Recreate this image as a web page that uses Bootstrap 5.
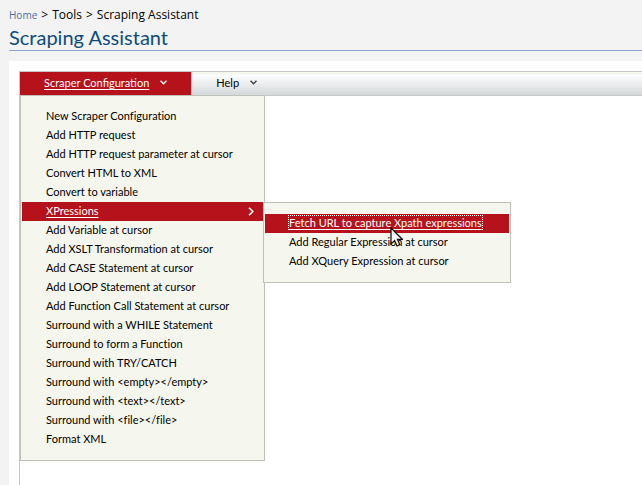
<!DOCTYPE html>
<html lang="en">
<head>
<meta charset="utf-8">
<meta name="viewport" content="width=device-width, initial-scale=1">
<title>Scraping Assistant</title>
<link href="https://cdn.jsdelivr.net/npm/bootstrap@5.3.0/dist/css/bootstrap.min.css" rel="stylesheet">
<style>
body { font-family: Lato, "Open Sans", sans-serif; font-variant-ligatures: none; font-size: 11px; line-height: 18px; color: #000; background: #f3f3f3; overflow: hidden; }
.page { min-height: 100vh; padding: 6px 0 0 9px; }
.crumbs { --bs-breadcrumb-divider: ">"; --bs-breadcrumb-divider-color: #000; --bs-breadcrumb-item-padding-x: 4px; --bs-breadcrumb-item-active-color: #000; --bs-breadcrumb-font-size: 12px; font-family: "Open Sans", sans-serif; }
.crumbs a { color: #4a6da3; font-size: 10px; text-decoration: none; }
.page-title { font-size: 20px; line-height: 26px; color: #0f4c7c; border-bottom: 1px solid #8ea5cd; margin-bottom: 10px; }
.panel { background: #fff; padding: 10px 0 0 10px; }
.workspace { border: solid #c8c8c8; border-width: 1px 0 0 1px; }
.menubar { background: linear-gradient(#f5f6ed 0, #f5f6ed 2px, #fdfefe 3px, #d5d8da 100%); border-bottom: 1px solid #c8c8c8; }
.menu-tab { color: #000; border: 0; border-right: 1px solid #c8c8c8; background: none; padding: 1px 24px 3px; gap: 11px; font-size: 11px; line-height: 19px; height: 23px; }
.menu-tab.open { background: #b5121b; color: #fff; }
.menu-tab.plain { border-right-color: transparent; }
.drop { min-width: 0; width: 245px; margin: 0; padding: 11px 1px; border: 1px solid #c0c1b8; border-radius: 0; background: #f5f6ed; font-size: 11px; color: #000; top: 100%; left: 0; display: block; }
.drop .dropdown-item { padding: 0 24px 2px; line-height: 17px; color: #000; font-size: 11px; }
.drop .dropdown-item.chosen { background: #b5121b; color: #fff; }
.lined { text-decoration: underline; text-underline-offset: 2px; }
.sub-drop { width: 248px; top: 0; left: 241px; }
.focused { outline: 1px dotted #fff; }
.go { right: 9px; top: 5px; }
.pointer { left: 126px; top: 24px; pointer-events: none; }
</style>
</head>
<body>
<div class="page d-flex flex-column">
  <nav aria-label="breadcrumb">
    <ol class="breadcrumb crumbs mb-0">
      <li class="breadcrumb-item"><a href="#">Home</a></li>
      <li class="breadcrumb-item">Tools</li>
      <li class="breadcrumb-item active" aria-current="page">Scraping Assistant</li>
    </ol>
  </nav>
  <h1 class="page-title fw-normal">Scraping Assistant</h1>
  <main class="panel flex-grow-1 d-flex flex-column">
    <div class="workspace flex-grow-1">
      <div class="menubar d-flex">
        <div class="position-relative">
          <button type="button" class="menu-tab open d-flex align-items-center" aria-expanded="true"><span class="lined">Scraper Configuration</span>
            <svg width="7" height="5" viewBox="0 0 7 5" fill="none" stroke="currentColor" stroke-width="1.5" aria-hidden="true"><path d="M.5 .7 3.5 3.7 6.5 .7"/></svg></button>
          <ul class="dropdown-menu drop">
            <li><a class="dropdown-item" href="#">New Scraper Configuration</a></li>
            <li><a class="dropdown-item" href="#">Add HTTP request</a></li>
            <li><a class="dropdown-item" href="#">Add HTTP request parameter at cursor</a></li>
            <li><a class="dropdown-item" href="#">Convert HTML to XML</a></li>
            <li><a class="dropdown-item" href="#">Convert to variable</a></li>
            <li class="position-relative">
              <a class="dropdown-item chosen" href="#"><span class="lined">XPressions</span>
                <svg class="go position-absolute" width="6" height="9" viewBox="0 0 6 9" fill="none" stroke="currentColor" stroke-width="1.6" aria-hidden="true"><path d="M1 .7 4.8 4.5 1 8.3"/></svg></a>
              <ul class="dropdown-menu drop sub-drop">
                <li><a class="dropdown-item chosen" href="#"><span class="lined focused">Fetch URL to capture Xpath expressions</span></a></li>
                <li><a class="dropdown-item" href="#">Add Regular Expression at cursor</a></li>
                <li><a class="dropdown-item" href="#">Add XQuery Expression at cursor</a></li>
                <li class="pointer position-absolute" aria-hidden="true">
                  <svg class="d-block" width="13" height="20" viewBox="0 0 13 20"><path d="M1 1V17L4.6 13.5 7 19 9.8 17.7 7.5 12.3H12.3Z" fill="#fff" stroke="#111" stroke-width="1.3"/></svg>
                </li>
              </ul>
            </li>
            <li><a class="dropdown-item" href="#">Add Variable at cursor</a></li>
            <li><a class="dropdown-item" href="#">Add XSLT Transformation at cursor</a></li>
            <li><a class="dropdown-item" href="#">Add CASE Statement at cursor</a></li>
            <li><a class="dropdown-item" href="#">Add LOOP Statement at cursor</a></li>
            <li><a class="dropdown-item" href="#">Add Function Call Statement at cursor</a></li>
            <li><a class="dropdown-item" href="#">Surround with a WHILE Statement</a></li>
            <li><a class="dropdown-item" href="#">Surround to form a Function</a></li>
            <li><a class="dropdown-item" href="#">Surround with TRY/CATCH</a></li>
            <li><a class="dropdown-item" href="#">Surround with &lt;empty&gt;&lt;/empty&gt;</a></li>
            <li><a class="dropdown-item" href="#">Surround with &lt;text&gt;&lt;/text&gt;</a></li>
            <li><a class="dropdown-item" href="#">Surround with &lt;file&gt;&lt;/file&gt;</a></li>
            <li><a class="dropdown-item" href="#">Format XML</a></li>
          </ul>
        </div>
        <button type="button" class="menu-tab plain d-flex align-items-center">Help
          <svg width="7" height="5" viewBox="0 0 7 5" fill="none" stroke="#444" stroke-width="1.5" aria-hidden="true"><path d="M.5 .7 3.5 3.7 6.5 .7"/></svg></button>
      </div>
    </div>
  </main>
</div>
<script src="https://cdn.jsdelivr.net/npm/bootstrap@5.3.0/dist/js/bootstrap.bundle.min.js"></script>
</body>
</html>
